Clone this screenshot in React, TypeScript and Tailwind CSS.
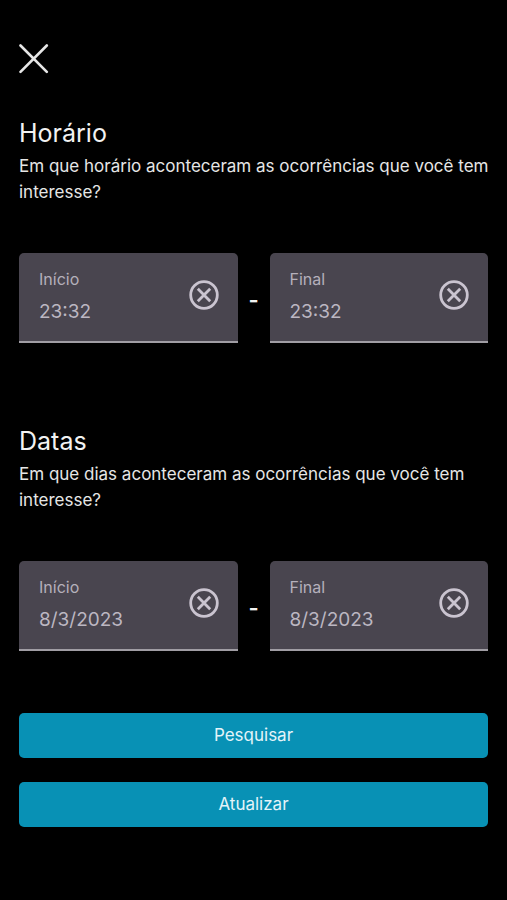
import { useState } from 'react';

type FieldProps = {
  id: string;
  label: string;
  initial: string;
};

const Field = ({ id, label, initial }: FieldProps) => {
  const [value, setValue] = useState(initial);

  return (
    <div className="flex h-[90px] min-w-0 flex-1 items-center rounded-t-[5px] border-b-2 border-[#a09da4] bg-[#49454f] pl-5 pr-[19px]">
      <div className="mb-1 flex min-w-0 flex-1 flex-col">
        <label htmlFor={id} className="text-base leading-8 text-[#b5b0bb]">
          {label}
        </label>
        <input
          id={id}
          type="text"
          value={value}
          onChange={(e) => setValue(e.target.value)}
          className="h-8 w-full bg-transparent text-[19px] text-[#bcb7c2] outline-none"
        />
      </div>
      <button type="button" onClick={() => setValue('')} aria-label={`Limpar ${label}`} className="mb-1 shrink-0">
        <svg width="30" height="30" viewBox="0 0 30 30" fill="none" stroke="#cac4d0" strokeWidth="2.8">
          <circle cx="15" cy="15" r="13.3" />
          <path d="M8.8 8.8 21.2 21.2M21.2 8.8 8.8 21.2" />
        </svg>
      </button>
    </div>
  );
};

type RangeSectionProps = {
  name: string;
  title: string;
  description: string;
  start: string;
  end: string;
};

const RangeSection = ({ name, title, description, start, end }: RangeSectionProps) => (
  <section>
    <h2 className="text-[25px] leading-10">{title}</h2>
    <p className="-mr-3 text-[17px] leading-[26px] text-[#e6e6e6]">{description}</p>
    <div className="mt-12 flex items-center">
      <Field id={`${name}-start`} label="Início" initial={start} />
      <span className="w-8 pt-1 text-center text-[22px] font-semibold">-</span>
      <Field id={`${name}-end`} label="Final" initial={end} />
    </div>
  </section>
);

const ActionButton = ({ children }: { children: string }) => (
  <button type="button" className="h-[45px] w-full rounded-[5px] bg-[#0891b5] text-[17px] text-[#e4f4f9]">
    {children}
  </button>
);

export default function App() {
  return (
    <main className="min-h-screen bg-black px-[19px] pt-11 pb-10 font-['Inter',sans-serif] text-[#f2f2f2]">
      <button type="button" aria-label="Fechar" className="block">
        <svg width="30" height="30" viewBox="0 0 30 30" fill="none" stroke="#e6e6e6" strokeWidth="2.6" strokeLinecap="round">
          <path d="M1.5 1.5 27.8 27.8M27.8 1.5 1.5 27.8" />
        </svg>
      </button>
      <div className="mt-[39px] flex flex-col gap-[78px]">
        <RangeSection
          name="time"
          title="Horário"
          description="Em que horário aconteceram as ocorrências que você tem interesse?"
          start="23:32"
          end="23:32"
        />
        <RangeSection
          name="date"
          title="Datas"
          description="Em que dias aconteceram as ocorrências que você tem interesse?"
          start="8/3/2023"
          end="8/3/2023"
        />
      </div>
      <div className="mt-[62px] flex flex-col gap-6">
        <ActionButton>Pesquisar</ActionButton>
        <ActionButton>Atualizar</ActionButton>
      </div>
    </main>
  );
}
